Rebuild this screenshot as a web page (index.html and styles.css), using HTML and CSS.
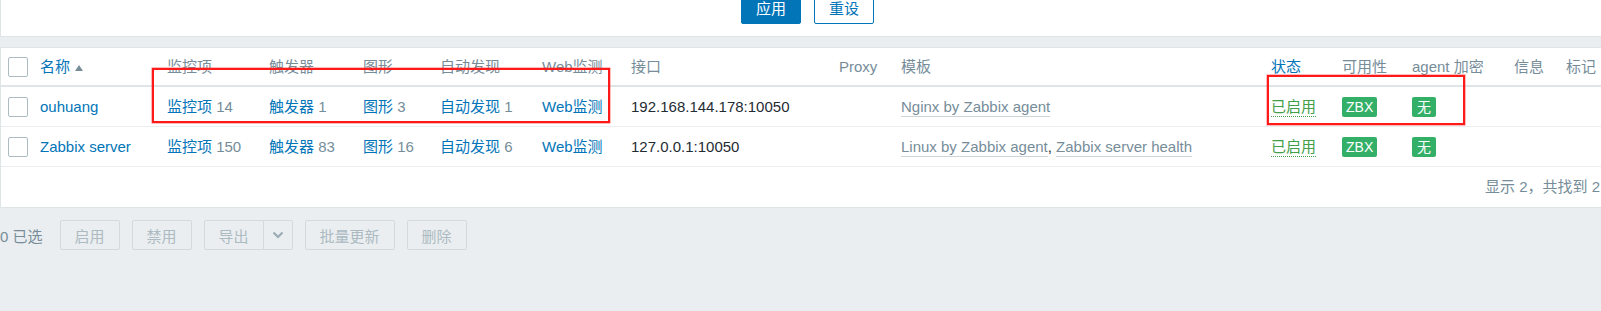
FILE: index.html
```html
<!DOCTYPE html>
<html lang="zh-CN">
<head>
  <meta charset="UTF-8">
  <title>主机</title>
  <link rel="stylesheet" href="styles.css">
</head>
<body>
  <!-- Filter panel (only its bottom edge is visible) -->
  <div class="filter">
    <button class="btn btn-main">应用</button>
    <button class="btn btn-alt">重设</button>
  </div>

  <!-- Hosts list -->
  <div class="hosts">
    <div class="row row-head">
      <div class="cell-chk"><span class="checkbox"></span></div>
      <div><a class="sort">名称</a><span class="arrow-up"></span></div>
      <div>监控项</div>
      <div>触发器</div>
      <div>图形</div>
      <div>自动发现</div>
      <div>Web监测</div>
      <div>接口</div>
      <div>Proxy</div>
      <div>模板</div>
      <div><a class="sort">状态</a></div>
      <div>可用性</div>
      <div>agent 加密</div>
      <div>信息</div>
      <div>标记</div>
    </div>

    <div class="row">
      <div class="cell-chk"><span class="checkbox"></span></div>
      <div><a class="link">ouhuang</a></div>
      <div><a class="link">监控项</a> <span class="count">14</span></div>
      <div><a class="link">触发器</a> <span class="count">1</span></div>
      <div><a class="link">图形</a> <span class="count">3</span></div>
      <div><a class="link">自动发现</a> <span class="count">1</span></div>
      <div><a class="link">Web监测</a></div>
      <div>192.168.144.178:10050</div>
      <div></div>
      <div><a class="tpl">Nginx by Zabbix agent</a></div>
      <div><a class="enabled">已启用</a></div>
      <div><span class="badge">ZBX</span></div>
      <div><span class="badge badge-sq">无</span></div>
      <div></div>
      <div></div>
    </div>

    <div class="row">
      <div class="cell-chk"><span class="checkbox"></span></div>
      <div><a class="link">Zabbix server</a></div>
      <div><a class="link">监控项</a> <span class="count">150</span></div>
      <div><a class="link">触发器</a> <span class="count">83</span></div>
      <div><a class="link">图形</a> <span class="count">16</span></div>
      <div><a class="link">自动发现</a> <span class="count">6</span></div>
      <div><a class="link">Web监测</a></div>
      <div>127.0.0.1:10050</div>
      <div></div>
      <div><a class="tpl">Linux by Zabbix agent</a>, <a class="tpl">Zabbix server health</a></div>
      <div><a class="enabled">已启用</a></div>
      <div><span class="badge">ZBX</span></div>
      <div><span class="badge badge-sq">无</span></div>
      <div></div>
      <div></div>
    </div>

    <div class="table-foot">显示 2，共找到 2</div>
  </div>

  <!-- Mass actions -->
  <div class="actions">
    <span class="selected">0 已选</span>
    <button class="btn-dis" disabled>启用</button>
    <button class="btn-dis" disabled>禁用</button>
    <span class="split">
      <button class="btn-dis split-main" disabled>导出</button>
      <button class="btn-dis split-arrow" disabled>
        <svg width="12" height="8" viewBox="0 0 12 8"><path d="M1.5 1.5 L6 6 L10.5 1.5" fill="none" stroke="#9aabb4" stroke-width="2.2"/></svg>
      </button>
    </span>
    <button class="btn-dis" disabled>批量更新</button>
    <button class="btn-dis" disabled>删除</button>
  </div>

  <!-- red annotation boxes drawn on the screenshot -->
  <div class="mark mark-links"></div>
  <div class="mark mark-status"></div>
</body>
</html>
```

FILE: styles.css
```css
html, body {
  margin: 0;
  padding: 0;
  overflow: hidden;
}

body {
  position: relative;
  width: 1601px;
  height: 311px;
  background: #ebeef0;
  font-family: "Liberation Sans", Arial, "Noto Sans CJK SC", sans-serif;
  font-size: 15px;
  color: #1f2c33;
}

/* Filter panel */
.filter {
  width: 1640px;
  height: 37px;
  box-sizing: border-box;
  background: #fff;
  border-left: 1px solid #dfe4e7;
  border-bottom: 1px solid #dfe4e7;
  display: flex;
  align-items: flex-start;
  gap: 13px;
  padding-left: 740px;
}

.btn {
  height: 30px;
  margin-top: -6px;
  padding: 0 14px;
  border: 1px solid #0275b8;
  border-radius: 2px;
  font-family: inherit;
  font-size: 15px;
  line-height: 28px;
}

.btn-main {
  background: #0275b8;
  color: #fff;
}

.btn-alt {
  background: #fff;
  color: #0275b8;
}

/* Hosts table */
.hosts {
  width: 1640px;
  margin-top: 10px;
  background: #fff;
  border: 1px solid #dfe4e7;
  border-right: none;
}

.row {
  display: grid;
  grid-template-columns: 39px 127px 102px 94px 77px 102px 89px 208px 62px 370px 71px 70px 102px 52px 1fr;
  align-items: center;
  height: 40px;
  box-sizing: border-box;
  border-bottom: 1px solid #ebeef0;
  white-space: nowrap;
  line-height: 20px;
}

.row-head {
  height: 39px;
  border-bottom: 2px solid #dfe4e7;
  color: #768d99;
}

.cell-chk {
  padding-left: 7px;
  display: flex;
}

.checkbox {
  display: block;
  width: 20px;
  height: 20px;
  box-sizing: border-box;
  border: 1px solid #acbbc2;
  border-radius: 2px;
  background: #fff;
}

.sort,
.link {
  color: #0275b8;
  text-decoration: none;
}

.arrow-up {
  display: inline-block;
  margin-left: 5px;
  width: 0;
  height: 0;
  border-left: 4.5px solid transparent;
  border-right: 4.5px solid transparent;
  border-bottom: 6px solid #768d99;
  vertical-align: 1px;
}

.count {
  color: #768d99;
}

.tpl {
  color: #768d99;
  text-decoration: none;
  border-bottom: 1px solid #cdd5d9;
  padding-bottom: 1px;
}

.enabled {
  color: #429e47;
  text-decoration: none;
  border-bottom: 1px dotted #429e47;
  padding-bottom: 1px;
}

.badge {
  display: inline-block;
  height: 20px;
  line-height: 20px;
  padding: 0 4px;
  border-radius: 2px;
  background: #34af67;
  color: #fff;
  font-size: 14px;
}

.badge-sq {
  padding: 0 5px;
}

.table-foot {
  height: 40px;
  line-height: 40px;
  text-align: right;
  padding-right: 41px;
  color: #768d99;
}

/* Mass action buttons */
.actions {
  display: flex;
  align-items: center;
  gap: 12px;
  margin-top: 12px;
}

.selected {
  margin-right: 5px;
  color: #768d99;
}

.btn-dis {
  height: 30px;
  padding: 0 14px;
  background: #ebeef0;
  border: 1px solid #d3dadd;
  border-radius: 2px;
  color: #acbbc2;
  font-family: inherit;
  font-size: 15px;
}

.split {
  display: flex;
}

.split-main {
  border-radius: 2px 0 0 2px;
}

.split-arrow {
  width: 30px;
  padding: 0;
  border-left: 1px solid #d3dadd;
  border-radius: 0 2px 2px 0;
  margin-left: -1px;
  display: flex;
  align-items: center;
  justify-content: center;
}

/* Annotation overlay */
.mark {
  position: absolute;
  border: 2px solid #ff1a1a;
  box-shadow: 0 0 0 0.5px rgba(255, 26, 26, 0.6);
  box-sizing: border-box;
}

.mark-links {
  left: 152px;
  top: 68px;
  width: 458px;
  height: 55px;
}

.mark-status {
  left: 1267px;
  top: 75px;
  width: 198px;
  height: 50px;
}
```
